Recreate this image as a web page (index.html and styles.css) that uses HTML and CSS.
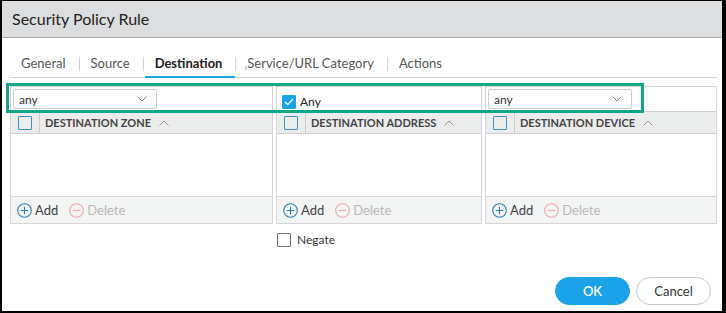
FILE: index.html
```html
<!DOCTYPE html>
<html>
  <head>
    <title>Security Policy Rule</title>
    <meta name="viewport" content="width=device-width, initial-scale=1" />
    <link rel="stylesheet" href="styles.css">
  </head>

  <body>
    <div class="dialog">
      <header class="dialog-header">Security Policy Rule</header>

      <nav class="tabs">
        <span class="tab">General</span>
        <span class="sep"></span>
        <span class="tab">Source</span>
        <span class="sep"></span>
        <span class="tab active">Destination</span>
        <span class="sep"></span>
        <span class="tab"><span class="clip">‚</span>Service/URL Category</span>
        <span class="sep"></span>
        <span class="tab">Actions</span>
      </nav>

      <div class="columns">
        <div class="column">
          <div class="panel">
            <div class="panel-top">
              <div class="select">
                <span>any</span>
                <svg width="10" height="6" viewBox="0 0 10 6"><path d="M0.5 0.5 L5 5 L9.5 0.5" fill="none" stroke="#888" stroke-width="1"/></svg>
              </div>
            </div>
            <div class="grid-head">
              <div class="check-cell"><span class="checkbox"></span></div>
              <div class="head-label">DESTINATION ZONE
                <svg width="10" height="6" viewBox="0 0 10 6"><path d="M0.5 5.5 L5 1 L9.5 5.5" fill="none" stroke="#999" stroke-width="1"/></svg>
              </div>
            </div>
            <div class="grid-body"></div>
            <div class="grid-foot">
              <span class="btn-add">
                <svg width="15" height="15" viewBox="0 0 15 15"><circle cx="7.5" cy="7.5" r="6.8" fill="none" stroke="#2c7fb3" stroke-width="1.1"/><path d="M7.5 3.8 V11.2 M3.8 7.5 H11.2" stroke="#2c7fb3" stroke-width="1.1"/></svg>
                Add
              </span>
              <span class="btn-delete">
                <svg width="15" height="15" viewBox="0 0 15 15"><circle cx="7.5" cy="7.5" r="6.8" fill="none" stroke="#eaaaaa" stroke-width="1.1"/><path d="M3.8 7.5 H11.2" stroke="#eaaaaa" stroke-width="1.1"/></svg>
                Delete
              </span>
            </div>
          </div>
        </div>

        <div class="column">
          <div class="panel">
            <div class="panel-top">
              <label class="any-check">
                <span class="checkbox checked">
                  <svg width="10" height="8" viewBox="0 0 10 8"><path d="M1 4 L3.8 6.6 L9 1" fill="none" stroke="#fff" stroke-width="1.3"/></svg>
                </span>
                Any
              </label>
            </div>
            <div class="grid-head">
              <div class="check-cell"><span class="checkbox"></span></div>
              <div class="head-label">DESTINATION ADDRESS
                <svg width="10" height="6" viewBox="0 0 10 6"><path d="M0.5 5.5 L5 1 L9.5 5.5" fill="none" stroke="#999" stroke-width="1"/></svg>
              </div>
            </div>
            <div class="grid-body"></div>
            <div class="grid-foot">
              <span class="btn-add">
                <svg width="15" height="15" viewBox="0 0 15 15"><circle cx="7.5" cy="7.5" r="6.8" fill="none" stroke="#2c7fb3" stroke-width="1.1"/><path d="M7.5 3.8 V11.2 M3.8 7.5 H11.2" stroke="#2c7fb3" stroke-width="1.1"/></svg>
                Add
              </span>
              <span class="btn-delete">
                <svg width="15" height="15" viewBox="0 0 15 15"><circle cx="7.5" cy="7.5" r="6.8" fill="none" stroke="#eaaaaa" stroke-width="1.1"/><path d="M3.8 7.5 H11.2" stroke="#eaaaaa" stroke-width="1.1"/></svg>
                Delete
              </span>
            </div>
          </div>
          <label class="negate">
            <span class="checkbox plain"></span>
            Negate
          </label>
        </div>

        <div class="column">
          <div class="panel">
            <div class="panel-top">
              <div class="select">
                <span>any</span>
                <svg width="10" height="6" viewBox="0 0 10 6"><path d="M0.5 0.5 L5 5 L9.5 0.5" fill="none" stroke="#888" stroke-width="1"/></svg>
              </div>
            </div>
            <div class="grid-head">
              <div class="check-cell"><span class="checkbox"></span></div>
              <div class="head-label">DESTINATION DEVICE
                <svg width="10" height="6" viewBox="0 0 10 6"><path d="M0.5 5.5 L5 1 L9.5 5.5" fill="none" stroke="#999" stroke-width="1"/></svg>
              </div>
            </div>
            <div class="grid-body"></div>
            <div class="grid-foot">
              <span class="btn-add">
                <svg width="15" height="15" viewBox="0 0 15 15"><circle cx="7.5" cy="7.5" r="6.8" fill="none" stroke="#2c7fb3" stroke-width="1.1"/><path d="M7.5 3.8 V11.2 M3.8 7.5 H11.2" stroke="#2c7fb3" stroke-width="1.1"/></svg>
                Add
              </span>
              <span class="btn-delete">
                <svg width="15" height="15" viewBox="0 0 15 15"><circle cx="7.5" cy="7.5" r="6.8" fill="none" stroke="#eaaaaa" stroke-width="1.1"/><path d="M3.8 7.5 H11.2" stroke="#eaaaaa" stroke-width="1.1"/></svg>
                Delete
              </span>
            </div>
          </div>
        </div>
      </div>

      <footer class="actions">
        <button class="btn btn-ok">OK</button>
        <button class="btn btn-cancel">Cancel</button>
      </footer>

      <div class="highlight"></div>
    </div>
  </body>
</html>
```

FILE: styles.css
```css
html,
body {
  margin: 0;
  background: #000;
}

body {
  font-family: Lato, "Open Sans", "Liberation Sans", sans-serif;
  color: #333;
  padding: 1px 4px 2px 2px;
}

.dialog {
  position: relative;
  width: 720px;
  height: 310px;
  background: #fff;
  display: flex;
  flex-direction: column;
  box-sizing: border-box;
}

.dialog-header {
  height: 37px;
  line-height: 36px;
  padding-left: 10px;
  font-size: 16px;
  color: #222;
  background: #dcdddf;
  border-bottom: 1px solid #a9a9a9;
  box-sizing: border-box;
}

.tabs {
  display: flex;
  align-items: flex-start;
  height: 40px;
  margin: 0 5px 0 8px;
  border-bottom: 1px solid #d3d3d3;
  box-sizing: border-box;
}

.tab {
  height: 40px;
  padding: 17px 13px 0 10px;
  font-size: 13px;
  line-height: 16px;
  color: #555;
  border-bottom: 2px solid transparent;
  box-sizing: border-box;
  white-space: nowrap;
}

.tab:first-child {
  padding-left: 11px;
}

.tab.active {
  color: #222;
  font-weight: bold;
  border-bottom-color: #1ba3dd;
}

.tab .clip {
  color: #999;
  margin-left: -3px;
}

.sep {
  width: 1px;
  height: 14px;
  margin: 19px 1px 0 0;
  background: #cfcfcf;
}

.columns {
  display: grid;
  grid-template-columns: 263px 206px 1fr;
  gap: 3px;
  margin: 8px 5px 0 8px;
}

.panel {
  border: 1px solid #d5d5d5;
}

.panel-top {
  height: 24px;
  display: flex;
  align-items: center;
  padding: 0 2px;
}

.select {
  display: flex;
  align-items: center;
  justify-content: space-between;
  width: 144px;
  height: 20px;
  padding: 0 9px 0 5px;
  border: 1px solid #cdcdcd;
  border-radius: 2px;
  font-size: 12px;
  color: #333;
  box-sizing: border-box;
}

.any-check {
  display: flex;
  align-items: center;
  gap: 4px;
  padding-left: 3px;
  margin-top: 5px;
  font-size: 12px;
  color: #222;
}

.checkbox {
  display: inline-flex;
  align-items: center;
  justify-content: center;
  width: 14px;
  height: 14px;
  border: 1.5px solid #3a8fc9;
  border-radius: 1px;
  box-sizing: border-box;
}

.checkbox.checked {
  background: #1aa3e8;
  border-color: #1aa3e8;
}

.checkbox.plain {
  border: 1px solid #6a6a6a;
}

.grid-head {
  display: flex;
  height: 23px;
  background: #ebecec;
  border-top: 1px solid #d0d0d0;
  border-bottom: 1px solid #d0d0d0;
  box-sizing: border-box;
}

.check-cell {
  width: 28px;
  display: flex;
  align-items: center;
  justify-content: center;
  border-right: 1px solid #cfcfcf;
}

.head-label {
  display: flex;
  align-items: center;
  gap: 8px;
  padding-left: 5px;
  font-size: 11px;
  font-weight: bold;
  color: #444;
}

.grid-body {
  height: 62px;
}

.grid-foot {
  display: flex;
  align-items: center;
  gap: 11px;
  height: 27px;
  padding-left: 6px;
  background: #f3f4f4;
  border-top: 1px solid #d5d5d5;
  font-size: 13px;
  box-sizing: border-box;
}

.btn-add,
.btn-delete {
  display: inline-flex;
  align-items: center;
  gap: 3px;
}

.btn-add {
  color: #444;
}

.btn-delete {
  color: #b9b9b9;
}

.negate {
  display: flex;
  align-items: center;
  gap: 6px;
  margin-top: 8px;
  padding-left: 1px;
  font-size: 12px;
  color: #333;
}

.actions {
  display: flex;
  justify-content: flex-end;
  gap: 6px;
  margin-top: auto;
  padding: 0 11px 6px 0;
}

.btn {
  width: 75px;
  height: 28px;
  border-radius: 14px;
  font-family: inherit;
  font-size: 13px;
  cursor: pointer;
}

.btn-ok {
  background: #1aa3e8;
  border: 1px solid #1aa3e8;
  color: #fff;
  font-weight: 600;
}

.btn-cancel {
  background: #fff;
  border: 1px solid #c9c9c9;
  color: #333;
}

.highlight {
  position: absolute;
  left: 4px;
  top: 82px;
  width: 638px;
  height: 30px;
  border: 3px solid #12a689;
  box-sizing: border-box;
}
```
